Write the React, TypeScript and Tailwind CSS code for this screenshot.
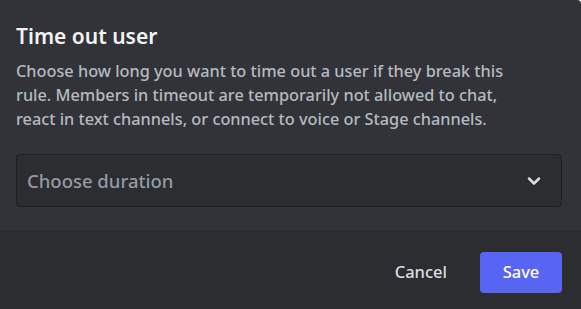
import React from 'react';

const font = { fontFamily: '"Noto Sans", "Open Sans", sans-serif' };

const App: React.FC = () => {
  return (
    <div className="w-[581px] h-[309px] bg-[#313338] flex flex-col overflow-hidden rounded-tr-[4px]" style={font}>
      <div className="flex-1 px-4 pt-[22px]">
        <h1 className="text-[21px] leading-[28px] font-semibold text-[#f2f3f5]">Time out user</h1>
        <p className="mt-[9px] whitespace-nowrap text-[16.3px] leading-[24px] font-medium text-[#b5bac1]">
          Choose how long you want to time out a user if they break this
          <br />
          rule. Members in timeout are temporarily not allowed to chat,
          <br />
          react in text channels, or connect to voice or Stage channels.
        </p>
        <button className="mt-[23px] w-[546px] h-[53px] flex items-center justify-between pl-[10px] pr-[17px] bg-[#2b2d31] border border-[#1e1f22] rounded-[4px]">
          <span className="text-[18.5px] font-medium text-[#949ba4]">Choose duration</span>
          <svg width="20" height="20" viewBox="0 0 24 24" fill="none">
            <path d="M6 9l6 6 6-6" stroke="#dbdee1" strokeWidth="3" strokeLinecap="round" strokeLinejoin="round" />
          </svg>
        </button>
      </div>
      <div className="h-[79px] bg-[#2b2d31] flex items-center justify-end pt-[6px] pr-[19px]">
        <button className="mr-[33px] text-[16.5px] font-medium text-[#dbdee1]">Cancel</button>
        <button className="w-[82px] h-[41px] rounded-[4px] bg-[#5865f2] text-white text-[16.5px] font-medium">Save</button>
      </div>
    </div>
  );
};

export default App;
